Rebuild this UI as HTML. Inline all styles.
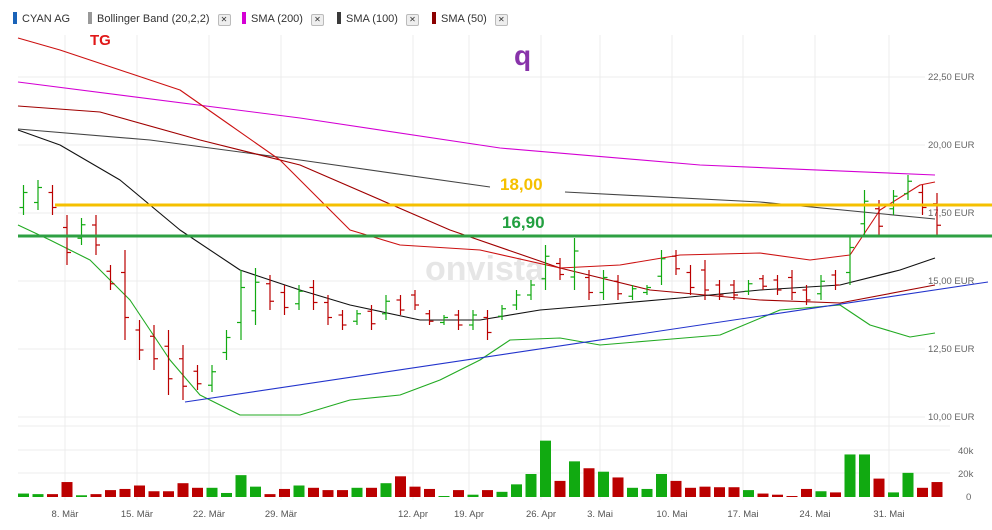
<!DOCTYPE html>
<html><head><meta charset="utf-8">
<style>
html,body{margin:0;padding:0;background:#fff;}
body{width:992px;height:530px;overflow:hidden;position:relative;font-family:"Liberation Sans",sans-serif;}
.leg{position:absolute;top:12px;font-size:11px;color:#333;height:14px;line-height:14px;}
.sw{display:inline-block;width:4px;height:12px;vertical-align:-2px;margin-right:5px;}
.x{display:inline-block;width:11px;height:10px;border:1px solid #bbb;border-radius:2px;background:#eee;font-size:8px;line-height:10px;text-align:center;margin-left:8px;vertical-align:0px;color:#333;}
svg{position:absolute;left:0;top:0;}
</style></head><body>
<div class="leg" style="left:13px"><span class="sw" style="background:#1a63b8"></span>CYAN AG</div>
<div class="leg" style="left:88px"><span class="sw" style="background:#999"></span>Bollinger Band (20,2,2)<span class="x">✕</span></div>
<div class="leg" style="left:242px"><span class="sw" style="background:#d400d4"></span>SMA (200)<span class="x">✕</span></div>
<div class="leg" style="left:337px"><span class="sw" style="background:#3a3a3a"></span>SMA (100)<span class="x">✕</span></div>
<div class="leg" style="left:432px"><span class="sw" style="background:#8b0000"></span>SMA (50)<span class="x">✕</span></div>
<svg id="s" width="992" height="530" xmlns="http://www.w3.org/2000/svg" font-family="Liberation Sans, sans-serif">
<g id="grid" stroke="#ececec" stroke-width="1"></g>
<text x="425" y="280" font-size="34" font-weight="bold" fill="#e6e6e6">onvista</text>
<g fill="#666" font-size="9.5">
<text x="928" y="80">22,50 EUR</text><text x="928" y="148">20,00 EUR</text><text x="928" y="216">17,50 EUR</text>
<text x="928" y="284">15,00 EUR</text><text x="928" y="352">12,50 EUR</text><text x="928" y="420">10,00 EUR</text>
<text x="958" y="454">40k</text><text x="958" y="477">20k</text><text x="966" y="500">0</text>
</g>
<g fill="#555" font-size="9.5" text-anchor="middle">
<text x="65" y="517">8. Mär</text><text x="137" y="517">15. Mär</text><text x="209" y="517">22. Mär</text><text x="281" y="517">29. Mär</text>
<text x="413" y="517">12. Apr</text><text x="469" y="517">19. Apr</text><text x="541" y="517">26. Apr</text><text x="600" y="517">3. Mai</text>
<text x="672" y="517">10. Mai</text><text x="743" y="517">17. Mai</text><text x="815" y="517">24. Mai</text><text x="889" y="517">31. Mai</text>
</g>
<g fill="none" stroke-width="1.1" stroke-linejoin="round">
<polyline stroke="#d400d4" points="18,82 300,118 500,148 700,165 935,175"/>
<polyline stroke="#444" points="18,129 150,140 300,160 490,187"/>
<polyline stroke="#444" points="565,192 760,202 935,219"/>
<polyline stroke="#a00000" points="18,106 100,112 200,140 300,165 450,230 560,268 650,290 760,300 840,303 935,285"/>
<polyline stroke="#cc1111" points="18,38 60,50 120,70 180,90 230,125 280,160 320,200 350,230 400,245 480,250 560,268 620,265 680,255 760,253 810,260 850,255 880,210 920,185 935,182"/>
<polyline stroke="#111" points="18,130 60,145 120,180 180,230 240,270 300,290 350,305 420,320 480,320 540,310 600,305 680,298 760,290 840,285 900,270 935,258"/>
<polyline stroke="#22aa22" points="18,225 50,240 90,260 130,300 170,360 200,395 240,415 300,415 350,400 400,395 440,380 480,360 510,340 560,338 600,345 660,340 720,335 780,310 840,305 870,325 910,337 935,333"/>
<line x1="185" y1="402" x2="988" y2="282" stroke="#2233cc"/>
</g>
<g id="ohlc" stroke-width="1.2"></g>
<g id="vol"></g>
<line x1="55" y1="205" x2="992" y2="205" stroke="#f5c000" stroke-width="3"/>
<line x1="18" y1="236" x2="992" y2="236" stroke="#2ea043" stroke-width="3"/>
<text x="500" y="190" font-size="17" font-weight="bold" fill="#f5c000">18,00</text>
<text x="502" y="228" font-size="17" font-weight="bold" fill="#22a040">16,90</text>
<text x="90" y="45" font-size="15" font-weight="bold" fill="#e01818">TG</text>
<text x="514" y="65" font-size="28" font-weight="bold" fill="#8833aa">q</text>
</svg>
<script>
var NS="http://www.w3.org/2000/svg";
function el(p,t,a){var e=document.createElementNS(NS,t);for(var k in a)e.setAttribute(k,a[k]);document.getElementById(p).appendChild(e);}
var xs=[65,137,209,281,413,469,541,600,672,743,815,889];
xs.forEach(function(x){el("grid","line",{x1:x,y1:35,x2:x,y2:500});});
[77,145,213,281,349,417].forEach(function(y){el("grid","line",{x1:18,y1:y,x2:925,y2:y});});
[426,450,473].forEach(function(y){el("grid","line",{x1:18,y1:y,x2:950,y2:y});});
var v="g3 g2.5 r2.5 r13 g1.5 r2.5 r6 r7 r10 r5 r5 r12 r8 g8 g3.5 g19 g9 r2.5 r7 g10 r8 r6 r6 g8 r8 g12 r18 r9 r7 g0.5 r6 g2 r6 g4.5 g11 g20 g49 r14 g31 r25 g22 r17 g8 g7 g20 r14 r8 r9 r8.5 r8.5 g6 r3 r2 r0.5 r7 g5 r4 g37 g37 r16 g4 g21 r8 r13".split(" ");
var hl=[[185,215],[180,210],[185,215],[215,265],[218,245],[215,255],[265,290],[250,340],[320,360],[325,370],[330,395],[345,400],[365,390],[365,392],[330,360],[270,340],[268,325],[275,310],[285,315],[285,310],[280,310],[295,325],[310,330],[310,325],[305,330],[295,320],[295,315],[290,310],[310,325],[315,325],[310,330],[310,330],[310,340],[305,320],[290,310],[280,300],[245,290],[258,280],[238,290],[270,300],[270,300],[275,300],[285,300],[285,295],[250,285],[250,275],[265,295],[260,300],[280,300],[280,300],[280,295],[275,290],[275,295],[270,300],[285,305],[275,300],[270,290],[235,285],[190,235],[200,235],[190,215],[175,200],[185,215],[193,236]];
v.forEach(function(s,i){
 var g=s[0]=="g",c=g?"#11aa11":"#bb0000",val=parseFloat(s.slice(1));
 var h=Math.max(1,val*1.15),x=18+i*14.5;
 el("vol","rect",{x:x,y:497-h,width:11,height:h,fill:c});
 var cx=x+5.5,a=hl[i][0],b=hl[i][1],d=b-a;
 var o=g?b-d*0.25:a+d*0.25,cl=g?a+d*0.25:b-d*0.25;
 el("ohlc","line",{x1:cx,y1:a,x2:cx,y2:b,stroke:c});
 el("ohlc","line",{x1:cx-4,y1:o,x2:cx,y2:o,stroke:c});
 el("ohlc","line",{x1:cx,y1:cl,x2:cx+4,y2:cl,stroke:c});
});
</script>
</body></html>
